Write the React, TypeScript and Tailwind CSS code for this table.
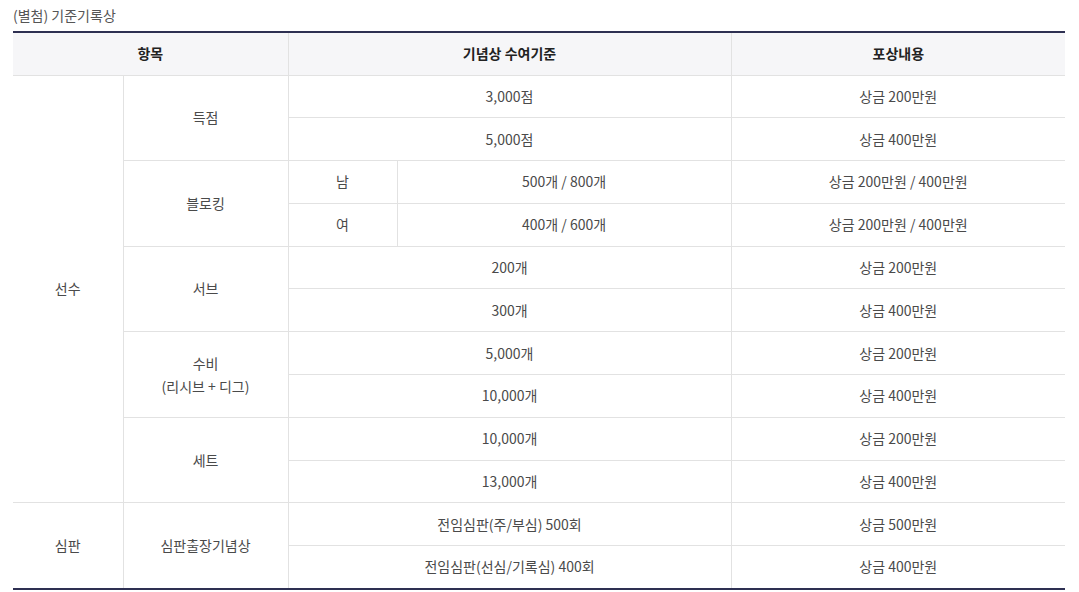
import React from "react";

const cell = "border border-[#e2e2e2] text-center align-middle";

export default function App() {
  return (
    <div className="w-[1079px] h-[592px] bg-white px-[13px] pt-[5px] text-[14px] text-[#4a4a4a] [font-family:'Noto_Sans_CJK_KR','Noto_Sans',sans-serif]">
      <div className="h-[26px] text-[14px] leading-[20px] text-[#555]">(별첨) 기준기록상</div>
      <table className="w-[1052px] border-collapse table-fixed border-t-2 border-t-[#2e3052] border-b-2 border-b-[#2e3052]">
        <colgroup>
          <col className="w-[110px]" />
          <col className="w-[165px]" />
          <col className="w-[109px]" />
          <col className="w-[334px]" />
          <col className="w-[334px]" />
        </colgroup>
        <thead>
          <tr className="h-[43px] bg-[#f6f6f8] text-[#222] font-bold">
            <th colSpan={2} className={`${cell} border-l-0 border-t-0`}>항목</th>
            <th colSpan={2} className={`${cell} border-t-0`}>기념상 수여기준</th>
            <th className={`${cell} border-r-0 border-t-0`}>포상내용</th>
          </tr>
        </thead>
        <tbody>
          <tr className="h-[42.8px]">
            <td rowSpan={10} className={`${cell} border-l-0`}>선수</td>
            <td rowSpan={2} className={cell}>득점</td>
            <td colSpan={2} className={cell}>3,000점</td>
            <td className={`${cell} border-r-0`}>상금 200만원</td>
          </tr>
          <tr className="h-[42.8px]">
            <td colSpan={2} className={cell}>5,000점</td>
            <td className={`${cell} border-r-0`}>상금 400만원</td>
          </tr>
          <tr className="h-[42.8px]">
            <td rowSpan={2} className={cell}>블로킹</td>
            <td className={cell}>남</td>
            <td className={cell}>500개 / 800개</td>
            <td className={`${cell} border-r-0`}>상금 200만원 / 400만원</td>
          </tr>
          <tr className="h-[42.8px]">
            <td className={cell}>여</td>
            <td className={cell}>400개 / 600개</td>
            <td className={`${cell} border-r-0`}>상금 200만원 / 400만원</td>
          </tr>
          <tr className="h-[42.8px]">
            <td rowSpan={2} className={cell}>서브</td>
            <td colSpan={2} className={cell}>200개</td>
            <td className={`${cell} border-r-0`}>상금 200만원</td>
          </tr>
          <tr className="h-[42.8px]">
            <td colSpan={2} className={cell}>300개</td>
            <td className={`${cell} border-r-0`}>상금 400만원</td>
          </tr>
          <tr className="h-[42.8px]">
            <td rowSpan={2} className={`${cell} leading-[23px]`}>
              수비
              <br />
              (리시브 + 디그)
            </td>
            <td colSpan={2} className={cell}>5,000개</td>
            <td className={`${cell} border-r-0`}>상금 200만원</td>
          </tr>
          <tr className="h-[42.8px]">
            <td colSpan={2} className={cell}>10,000개</td>
            <td className={`${cell} border-r-0`}>상금 400만원</td>
          </tr>
          <tr className="h-[42.8px]">
            <td rowSpan={2} className={cell}>세트</td>
            <td colSpan={2} className={cell}>10,000개</td>
            <td className={`${cell} border-r-0`}>상금 200만원</td>
          </tr>
          <tr className="h-[42.8px]">
            <td colSpan={2} className={cell}>13,000개</td>
            <td className={`${cell} border-r-0`}>상금 400만원</td>
          </tr>
          <tr className="h-[42.8px]">
            <td rowSpan={2} className={`${cell} border-l-0 border-b-0`}>심판</td>
            <td rowSpan={2} className={`${cell} border-b-0`}>심판출장기념상</td>
            <td colSpan={2} className={cell}>전임심판(주/부심) 500회</td>
            <td className={`${cell} border-r-0`}>상금 500만원</td>
          </tr>
          <tr className="h-[42.8px]">
            <td colSpan={2} className={`${cell} border-b-0`}>전임심판(선심/기록심) 400회</td>
            <td className={`${cell} border-r-0 border-b-0`}>상금 400만원</td>
          </tr>
        </tbody>
      </table>
    </div>
  );
}
